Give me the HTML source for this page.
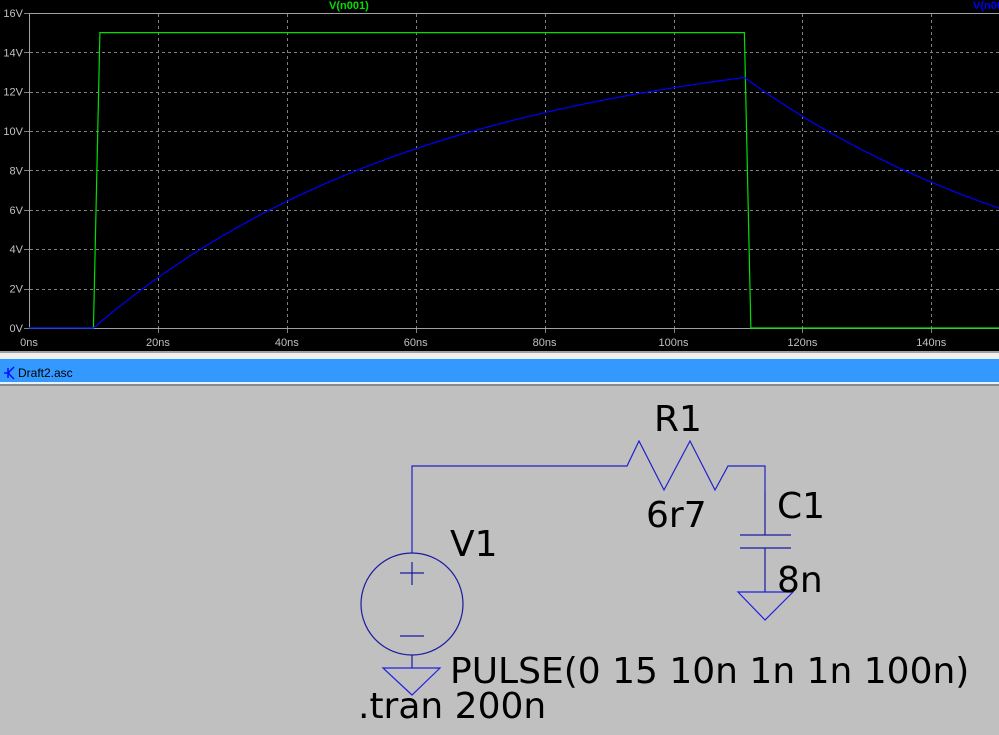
<!DOCTYPE html>
<html><head><meta charset="utf-8"><style>
html,body{margin:0;padding:0;width:999px;height:735px;overflow:hidden;background:#c0c0c0}
svg{display:block}
</style></head><body>
<svg width="999" height="735" xmlns="http://www.w3.org/2000/svg">
<rect x="0" y="0" width="999" height="351" fill="#000"/>
<rect x="0" y="351" width="999" height="8" fill="#f0f0f0"/>
<rect x="0" y="351" width="999" height="2" fill="#a0a0a0"/>
<rect x="0" y="359" width="999" height="23" fill="#3399ff"/>
<rect x="0" y="382" width="999" height="2" fill="#e8f2ff"/>
<rect x="0" y="384" width="999" height="2" fill="#8a8a8a"/>
<rect x="0" y="386" width="999" height="349" fill="#c0c0c0"/>
<g id="grid" stroke="#808080" stroke-width="1" stroke-dasharray="3,3"></g>
<line x1="29" y1="13.5" x2="999" y2="13.5" stroke="#a0a0a0"/>
<line x1="29.5" y1="13" x2="29.5" y2="328" stroke="#a0a0a0"/>
<line x1="29" y1="328.5" x2="999" y2="328.5" stroke="#a0a0a0"/>
<g id="labels" font-family="Liberation Sans, sans-serif" font-size="11" fill="#c0c0c0"></g>
<text x="329" y="9" font-family="Liberation Sans, sans-serif" font-size="11" font-weight="bold" fill="#00e000">V(n001)</text>
<text x="973" y="9" font-family="Liberation Sans, sans-serif" font-size="11" font-weight="bold" fill="#0000ff">V(n002)</text>
<polyline id="g" fill="none" stroke="#00e000" stroke-width="1.2"/>
<polyline id="b" fill="none" stroke="#0000ff" stroke-width="1.2"/>
<g fill="none" stroke="#0000ff" stroke-width="1.3">
<path d="M8 368 L8 378 M8 373 L14 367 M8 373 L14 379 M4 373 L8 373"/>
</g>
<text x="18" y="377" font-family="Liberation Sans, sans-serif" font-size="12" fill="#000">Draft2.asc</text>
<g fill="none" stroke="#1a1aa0" stroke-width="1.2">
<path d="M412 553 L412 466 L627 466 L639 441 L664 490 L690 441 L715 490 L728 466 L765 466 L765 492" stroke="#2020c8"/>
<path d="M765 492 L765 535 M740 535 L791 535 M740 548 L791 548 M765 548 L765 592"/>
<path d="M738 592 L793 592 L765 620 Z" stroke="#2020e0"/>
<circle cx="412" cy="604" r="51"/>
<path d="M400 573 L424 573 M412 562 L412 585 M400 636 L424 636 M412 655 L412 668"/>
<path d="M383 668 L440 668 L412 695 Z" stroke="#2020e0"/>
</g>
<g font-family="DejaVu Sans, sans-serif" font-size="36" fill="#000">
<text x="654" y="431">R1</text>
<text x="646" y="527">6r7</text>
<text x="777" y="518">C1</text>
<text x="777" y="592">8n</text>
<text x="450" y="556">V1</text>
<text x="450" y="683">PULSE(0 15 10n 1n 1n 100n)</text>
<text x="358" y="718">.tran 200n</text>
</g>
</svg>
<script>
var X=function(t){return 29+t*6.445},Y=function(v){return 328-v*19.69};
var grid=document.getElementById('grid'),lab=document.getElementById('labels'),ns='http://www.w3.org/2000/svg';
function el(p,n,a,txt){var e=document.createElementNS(ns,n);for(var k in a)e.setAttribute(k,a[k]);if(txt)e.textContent=txt;p.appendChild(e);}
for(var t=20;t<=140;t+=20){var x=Math.round(X(t))+.5;el(grid,'line',{x1:x,y1:14,x2:x,y2:328});el(grid,'line',{x1:x,y1:328,x2:x,y2:333,'stroke-dasharray':'none'});}
for(var t=0;t<=140;t+=20){el(lab,'text',{x:X(t),y:346,'text-anchor':'middle'},t+'ns');}
for(var v=2;v<=14;v+=2){var y=Math.round(Y(v))+.5;el(grid,'line',{x1:30,y1:y,x2:999,y2:y});}
for(var v=0;v<=16;v+=2){var y=Y(v);el(grid,'line',{x1:24,y1:Math.round(y)+.5,x2:29,y2:Math.round(y)+.5,'stroke-dasharray':'none'});el(lab,'text',{x:23,y:y+4,'text-anchor':'end'},v+'V');}
document.getElementById('g').setAttribute('points',[[0,0],[10,0],[11,15],[111,15],[112,0],[160,0]].map(function(p){return X(p[0])+','+Y(p[1])}).join(' '));
var pts=[X(0)+','+Y(0),X(10)+','+Y(0)],tau=53.6,vm=0;
for(var t=10;t<=160;t+=0.5){var v;if(t<=111){v=15*(1-Math.exp(-(t-10)/tau));vm=v;}else v=vm*Math.exp(-(t-111)/tau);pts.push(X(t).toFixed(1)+','+Y(v).toFixed(1));}
document.getElementById('b').setAttribute('points',pts.join(' '));
</script>
</body></html>
